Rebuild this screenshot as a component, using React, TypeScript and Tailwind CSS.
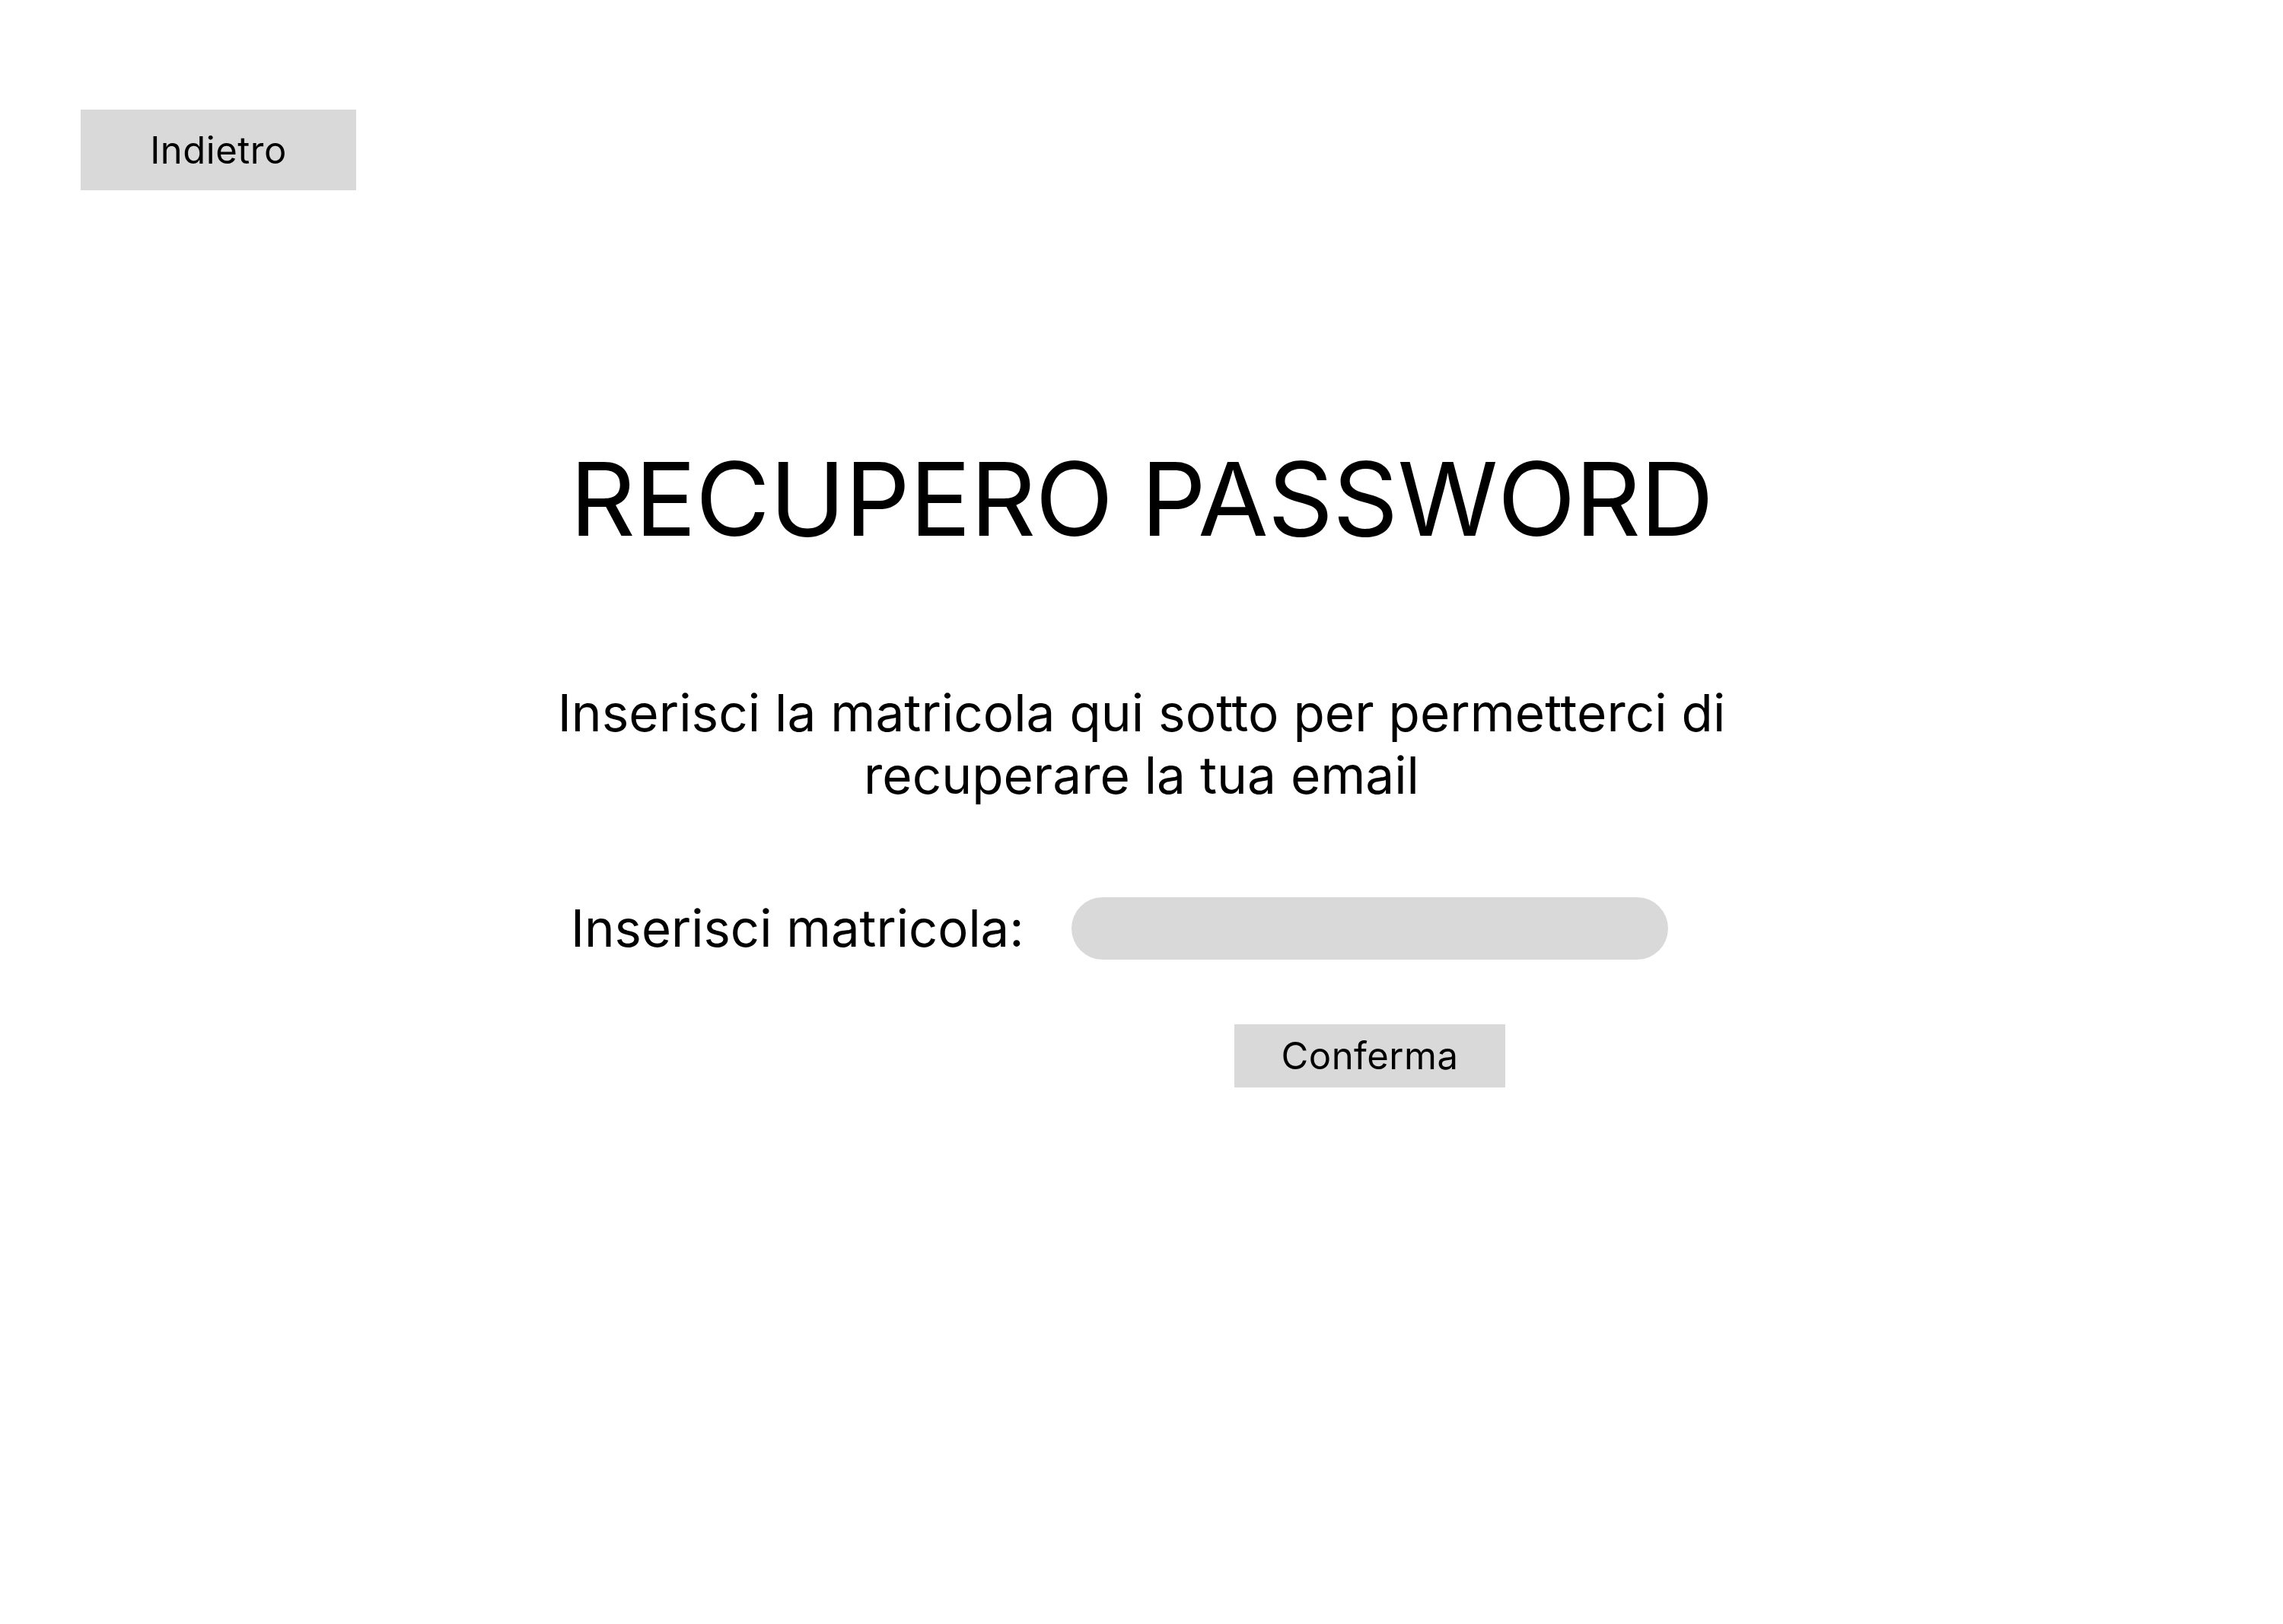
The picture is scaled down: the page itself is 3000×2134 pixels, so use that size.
import { useState } from 'react';

export default function App() {
    const [matricola, setMatricola] = useState('');

    return (
        <div className="w-[3000px] h-[2134px] bg-white text-black font-['Inter','Liberation_Sans',sans-serif]">
            {/* Back button */}
            <div className="pl-[106px] pt-[144px]">
                <button
                    type="button"
                    className="w-[362px] h-[106px] bg-[#d9d9d9] flex items-center justify-center text-[49px] tracking-[0.5px] leading-none"
                >
                    Indietro
                </button>
            </div>

            <h1 className="mt-[324px] text-center text-[134px] tracking-[-0.7px] leading-[162px] font-normal">
                RECUPERO PASSWORD
            </h1>

            <p className="mt-[160px] text-center text-[67.5px] leading-[82px]">
                Inserisci la matricola qui sotto per permetterci di
                <br />
                recuperare la tua email
            </p>

            <div className="mt-[119px] flex pl-[750px]">
                <label htmlFor="matricola" className="w-[658px] text-[67px] leading-[82px] whitespace-nowrap">
                    Inserisci matricola:
                </label>
                <div className="w-[784px] flex flex-col items-center">
                    <input
                        id="matricola"
                        value={matricola}
                        onChange={(e) => setMatricola(e.target.value)}
                        className="w-full h-[82px] rounded-full bg-[#d9d9d9] px-10 text-[48px] outline-none"
                    />
                    <button
                        type="button"
                        className="mt-[85px] w-[356px] h-[83px] bg-[#d9d9d9] flex items-center justify-center text-[49px] tracking-[0.5px] leading-none"
                    >
                        Conferma
                    </button>
                </div>
            </div>
        </div>
    );
}
